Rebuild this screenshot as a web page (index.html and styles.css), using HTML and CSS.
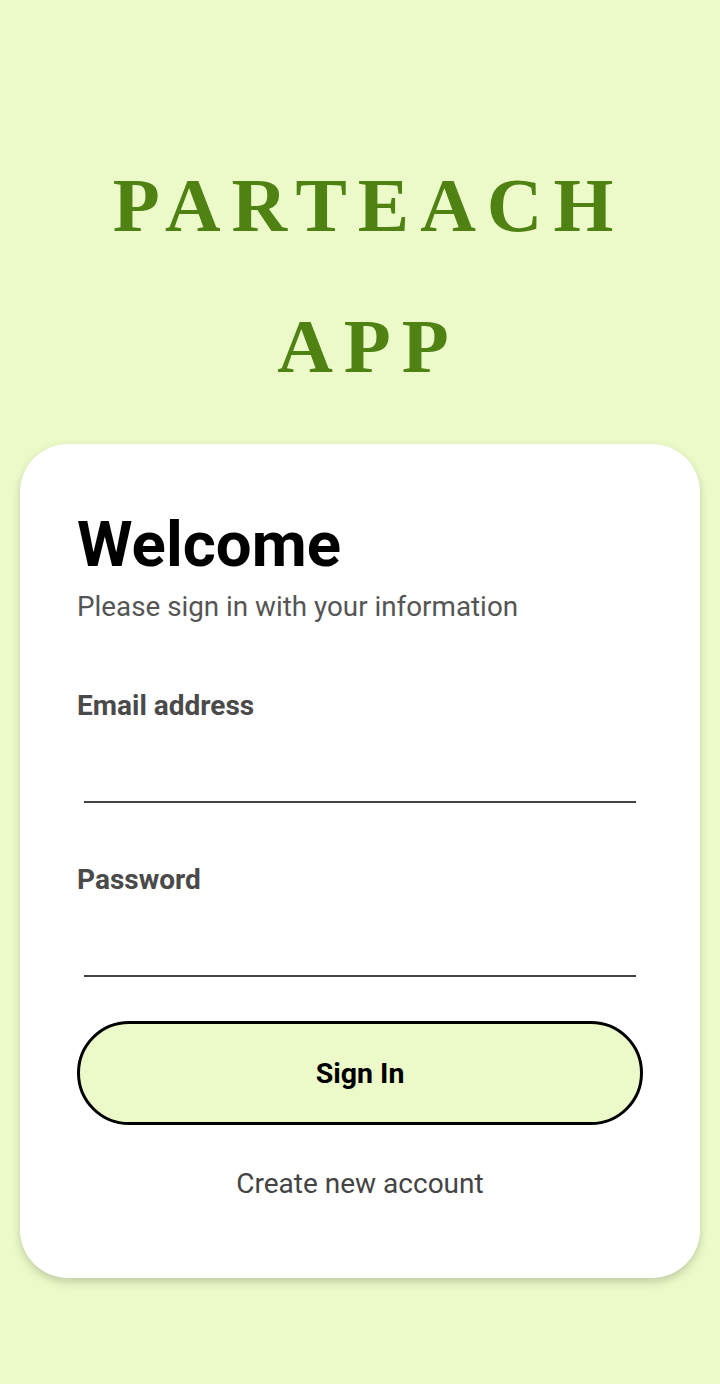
FILE: index.html
```html
<!DOCTYPE html>
<html lang="en">
<head>
<meta charset="utf-8">
<title>Parteach App</title>
<link rel="stylesheet" href="styles.css">
</head>
<body>
<div class="screen">
  <header class="brand">
    <div class="brand-line">PARTEACH</div>
    <div class="brand-line">APP</div>
  </header>
  <main class="card">
    <h1 class="welcome">Welcome</h1>
    <p class="subtitle">Please sign in with your information</p>
    <div class="field">
      <label class="field-label">Email address</label>
      <div class="field-input"></div>
    </div>
    <div class="field">
      <label class="field-label">Password</label>
      <div class="field-input"></div>
    </div>
    <button class="signin">Sign In</button>
    <div class="create">Create new account</div>
  </main>
</div>
</body>
</html>
```
FILE: styles.css
```css
html, body {
  margin: 0;
  padding: 0;
  background: #ecfaca;
}
.screen {
  width: 720px;
  height: 1384px;
  display: flex;
  flex-direction: column;
  font-family: Roboto, "Noto Sans", sans-serif;
}
.brand {
  padding-top: 135px;
  height: 444px;
  flex: none;
  box-sizing: border-box;
  text-align: center;
}
.brand-line {
  font-family: "Liberation Serif", "DejaVu Serif", serif;
  font-weight: bold;
  font-size: 77px;
  line-height: 141px;
  letter-spacing: 11px;
  padding-left: 17px;
  color: #4f8212;
}
.card {
  margin: 0 20px;
  height: 834px;
  flex: none;
  box-sizing: border-box;
  background: #fff;
  border-radius: 48px;
  box-shadow: 0 4px 8px rgba(60, 70, 40, 0.25);
  padding: 62px 57px 0;
  display: flex;
  flex-direction: column;
}
.welcome {
  margin: 0;
  font-size: 63.5px;
  font-weight: bold;
  line-height: 78px;
  color: #000;
}
.subtitle {
  margin: 5px 0 0;
  font-size: 27.8px;
  line-height: 36px;
  color: #555;
}
.field {
  margin-top: 63px;
  display: flex;
  flex-direction: column;
}
.field + .field { margin-top: 59px; }
.field-label {
  font-size: 28px;
  font-weight: bold;
  color: #4a4a4a;
  line-height: 36px;
}
.field-input {
  margin: 0 7px;
  height: 77px;
  border-bottom: 2px solid #444;
}
.signin {
  margin-top: 44px;
  height: 104px;
  border: 3.5px solid #000;
  border-radius: 52px;
  background: #ecfaca;
  font-family: Roboto, sans-serif;
  font-weight: bold;
  font-size: 28.5px;
  color: #000;
}
.create {
  margin-top: 41px;
  text-align: center;
  font-size: 28px;
  line-height: 36px;
  color: #444;
}
```
